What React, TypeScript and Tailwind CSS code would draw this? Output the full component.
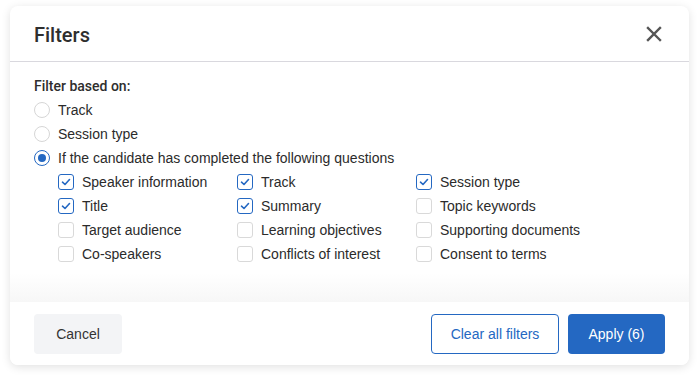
import { useState } from "react";

const questions = [
  { label: "Speaker information", checked: true },
  { label: "Track", checked: true },
  { label: "Session type", checked: true },
  { label: "Title", checked: true },
  { label: "Summary", checked: true },
  { label: "Topic keywords", checked: false },
  { label: "Target audience", checked: false },
  { label: "Learning objectives", checked: false },
  { label: "Supporting documents", checked: false },
  { label: "Co-speakers", checked: false },
  { label: "Conflicts of interest", checked: false },
  { label: "Consent to terms", checked: false },
];

const Radio = ({ checked }: { checked: boolean }) => (
  <span
    className={
      "w-4 h-4 rounded-full border flex items-center justify-center bg-white " +
      (checked ? "border-[#2468c2]" : "border-[#d6d6d6]")
    }
  >
    {checked && <span className="w-2 h-2 rounded-full bg-[#2468c2]" />}
  </span>
);

const Checkbox = ({ checked }: { checked: boolean }) => (
  <span
    className={
      "w-4 h-4 rounded-[3px] border flex items-center justify-center bg-white " +
      (checked ? "border-[#2468c2]" : "border-[#d9d9d9]")
    }
  >
    {checked && (
      <svg width="10" height="10" viewBox="0 0 10 10" fill="none">
        <path d="M1.5 5.2 L4 7.5 L8.5 2.5" stroke="#2468c2" strokeWidth="1.6" strokeLinecap="round" strokeLinejoin="round" />
      </svg>
    )}
  </span>
);

export default function App() {
  const [mode] = useState("questions");

  return (
    <div className="w-[700px] h-[380px] bg-white pt-[6px] px-[10px] font-['Liberation_Sans',Arial,sans-serif] text-[#2b2b2b]">
      <div className="w-[679px] h-[359px] rounded-lg bg-white shadow-[0_2px_10px_rgba(0,0,0,0.12)] flex flex-col overflow-hidden">
        <div className="h-[56px] flex items-center justify-between pl-6 pr-[27px] border-b border-[#d9d8de]">
          <span className="text-[20px] font-medium font-['Roboto',sans-serif] text-[#2e2e2e] mt-[2px]">Filters</span>
          <svg width="16" height="16" viewBox="0 0 16 16" className="mt-[1px]">
            <path d="M2 2 L14 14 M14 2 L2 14" stroke="#555" strokeWidth="2.4" strokeLinecap="square" />
          </svg>
        </div>
        <div className="flex-1 pt-3 pl-6 bg-gradient-to-b from-white from-[88%] to-[#f7f7f7]">
          <div className="text-sm font-medium font-['Roboto',sans-serif] leading-6 text-[#2e2e2e]">Filter based on:</div>
          <div className="flex flex-col text-sm">
            <label className="flex items-center gap-2 h-6">
              <Radio checked={mode === "track"} />
              <span>Track</span>
            </label>
            <label className="flex items-center gap-2 h-6">
              <Radio checked={mode === "session"} />
              <span>Session type</span>
            </label>
            <label className="flex items-center gap-2 h-6">
              <Radio checked={mode === "questions"} />
              <span>If the candidate has completed the following questions</span>
            </label>
            <div className="grid grid-cols-[179px_179px_179px] pl-6">
              {questions.map((q) => (
                <label key={q.label} className="flex items-center gap-2 h-6">
                  <Checkbox checked={q.checked} />
                  <span>{q.label}</span>
                </label>
              ))}
            </div>
          </div>
        </div>
        <div className="h-[63px] flex items-start justify-between px-6 pt-3 bg-white">
          <button className="w-[88px] h-10 rounded bg-[#f3f4f6] text-sm text-[#333]">Cancel</button>
          <div className="flex gap-[9px]">
            <button className="w-[128px] h-10 rounded border border-[#2468c2] text-sm text-[#2468c2] bg-white">
              Clear all filters
            </button>
            <button className="w-[97px] h-10 rounded bg-[#2468c2] text-sm text-white">Apply (6)</button>
          </div>
        </div>
      </div>
    </div>
  );
}
